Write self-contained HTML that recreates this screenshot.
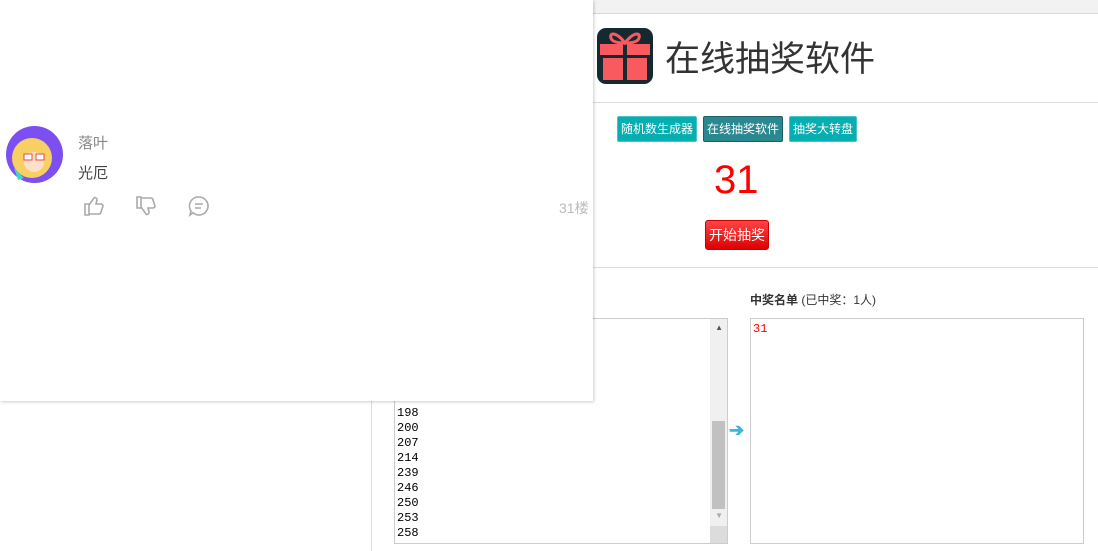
<!DOCTYPE html>
<html><head><meta charset="utf-8"><style>
*{margin:0;padding:0;box-sizing:border-box}
body{width:1098px;height:551px;overflow:hidden;background:#fff;position:relative;font-family:"Liberation Sans","Noto Sans CJK SC",sans-serif}
.a{position:absolute}
.btn{position:absolute;top:116px;height:26px;color:#fff;font-size:12px;line-height:24px;text-align:center;border-radius:2px}
.nums div{height:15px;line-height:15px}
</style></head><body>
<div class="a" style="left:371px;top:0;width:1px;height:551px;background:#ddd"></div>
<div class="a" style="left:372px;top:0;width:726px;height:14px;background:#f2f2f2;border-bottom:1px solid #d8d8d8"></div>
<div class="a" style="left:372px;top:102px;width:726px;height:1px;background:#ddd"></div>
<div class="a" style="left:372px;top:267px;width:726px;height:1px;background:#ddd"></div>
<svg class="a" style="left:597px;top:28px" width="56" height="56" viewBox="0 0 56 56">
<rect width="56" height="56" rx="9" fill="#142a30"/>
<rect x="3" y="16" width="50" height="13" fill="#f95a5f"/>
<rect x="6" y="29" width="44" height="23" fill="#f95a5f"/>
<rect x="26" y="16" width="4" height="36" fill="#142a30"/>
<rect x="3" y="27" width="50" height="3" fill="#142a30"/>
<path d="M28 15 C20 4 12 4 14 10 C15 14 22 15 28 15 C34 15 41 14 42 10 C44 4 36 4 28 15Z" fill="none" stroke="#f95a5f" stroke-width="3"/>
</svg>
<div class="a" style="left:665px;top:35px;font-size:35px;color:#333;line-height:50px">在线抽奖软件</div>
<div class="btn" style="left:617px;width:80px;background:#05aeb0;border:1px solid #4bc3c5">随机数生成器</div>
<div class="btn" style="left:703px;width:80px;background:#2a8890;border:1px solid #1f5e66">在线抽奖软件</div>
<div class="btn" style="left:789px;width:68px;background:#05aeb0;border:1px solid #4bc3c5">抽奖大转盘</div>
<div class="a" style="left:714px;top:157px;font-size:40px;color:#f00;line-height:46px">31</div>
<div class="a" style="left:705px;top:220px;width:64px;height:30px;background:linear-gradient(#f44,#d00);border:1px solid #c00;border-radius:3px;color:#fff;font-size:14px;line-height:28px;text-align:center">开始抽奖</div>
<div class="a" style="left:750px;top:291px;font-size:12px;color:#333"><b>中奖名单</b> (已中奖：1人)</div>
<div class="a" style="left:394px;top:318px;width:334px;height:226px;border:1px solid #ccc;overflow:hidden">
<div class="nums a" style="left:2px;top:72px;font-family:'Liberation Mono',monospace;font-size:12px;color:#000">
<div>191</div><div>198</div><div>200</div><div>207</div><div>214</div><div>239</div><div>246</div><div>250</div><div>253</div><div>258</div></div>
<div class="a" style="right:0;top:0;width:17px;height:226px;background:#f0f0f0"></div>
<div class="a" style="right:2px;top:102px;width:13px;height:88px;background:#c1c1c1"></div>
<div class="a" style="right:4px;top:4px;font-size:8px;color:#555">▲</div>
<div class="a" style="right:4px;top:192px;font-size:8px;color:#aaa">▼</div>
<div class="a" style="right:0;bottom:0;width:17px;height:17px;background:#dcdcdc"></div>
</div>
<div class="a" style="left:729px;top:420px;font-size:18px;color:#3bb6dc;font-weight:bold">➔</div>
<div class="a" style="left:750px;top:318px;width:334px;height:226px;border:1px solid #ccc">
<div style="color:#f00;font-family:'Liberation Mono',monospace;font-size:12px;padding:3px 2px">31</div></div>
<div class="a" style="left:0;top:0;width:593px;height:401px;background:#fff;box-shadow:1px 1px 3px rgba(0,0,0,.2)"></div>
<svg class="a" style="left:6px;top:126px" width="57" height="57" viewBox="0 0 57 57">
<circle cx="28.5" cy="28.5" r="28.5" fill="#7b4ff0"/>
<circle cx="26" cy="32" r="20" fill="#f8cf63"/>
<circle cx="28" cy="36" r="10" fill="#fde0c8"/>
<rect x="18" y="28" width="8" height="6" fill="#fff" stroke="#e44" />
<rect x="30" y="28" width="8" height="6" fill="#fff" stroke="#e44"/>
<path d="M8 42 L18 52 L12 54Z" fill="#3dd6c0"/>
</svg>
<div class="a" style="left:78px;top:132px;font-size:15px;color:#888">落叶</div>
<div class="a" style="left:78px;top:162px;font-size:15px;color:#444">光厄</div>
<svg class="a" style="left:83px;top:195px" width="22" height="22" viewBox="0 0 22 22" fill="none" stroke="#aaa" stroke-width="1.6"><path d="M2 9h4v11H2zM6 19h10c1 0 2-1 2-2l2-6c0-1-1-2-2-2h-5l1-4c0-2-2-3-3-2L6 10"/></svg>
<svg class="a" style="left:135px;top:195px" width="22" height="22" viewBox="0 0 22 22" fill="none" stroke="#aaa" stroke-width="1.6"><path d="M2 2h4v11H2zM6 3h10c1 0 2 1 2 2l2 6c0 1-1 2-2 2h-5l1 4c0 2-2 3-3 2L6 12"/></svg>
<svg class="a" style="left:188px;top:195px" width="22" height="22" viewBox="0 0 22 22" fill="none" stroke="#aaa" stroke-width="1.6"><path d="M11 2a9 9 0 1 1-6 15.7L2 20l1-4A9 9 0 0 1 11 2z"/><path d="M7 9h8M7 13h6"/></svg>
<div class="a" style="left:559px;top:198px;font-size:14px;color:#bbb">31楼</div>
</body></html>
